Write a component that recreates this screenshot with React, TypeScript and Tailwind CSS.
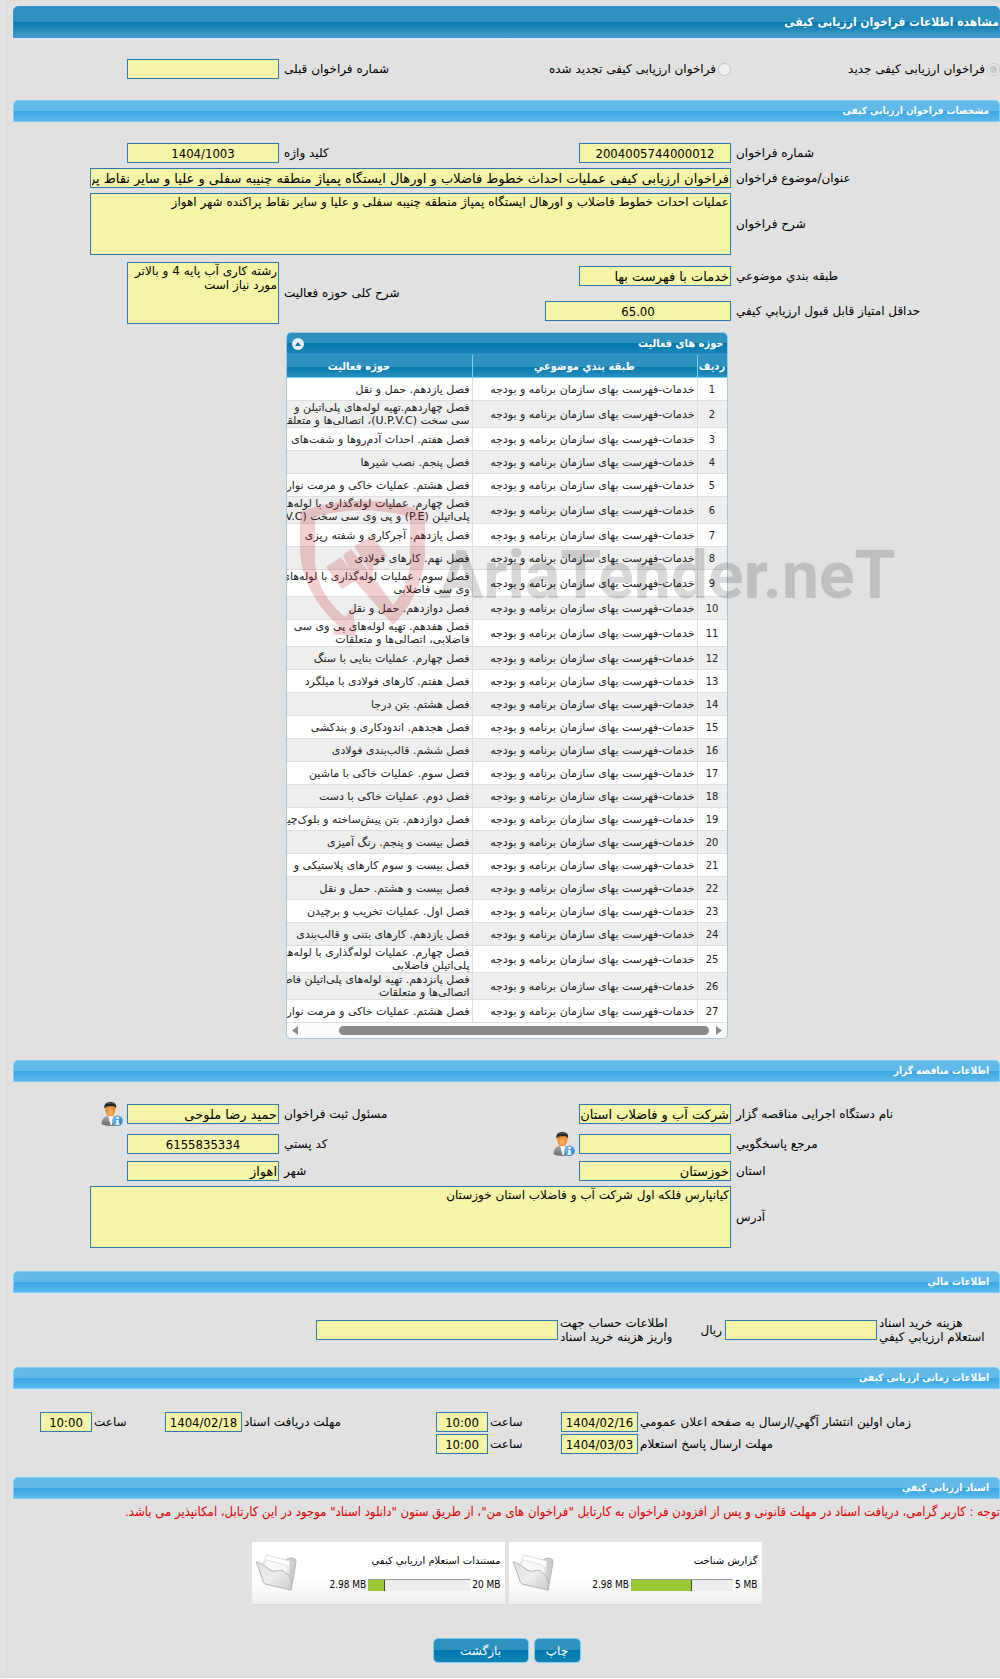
import React from "react";

const TOPIC = "خدمات-فهرست بهای سازمان برنامه و بودجه";

const activities: string[][] = [
  ["فصل یازدهم. حمل و نقل"],
  ["فصل چهاردهم.تهیه لوله‌های پلی‌اتیلن و", "سی سخت (U.P.V.C)، اتصالی‌ها و متعلقات"],
  ["فصل هفتم. احداث آدم‌روها و شفت‌های ف"],
  ["فصل پنجم. نصب شیرها"],
  ["فصل هشتم. عملیات خاکی و مرمت نوار"],
  ["فصل چهارم. عملیات لوله‌گذاری با لوله‌های", "پلی‌اتیلن (P.E) و پی وی سی سخت (U.P.V.C)"],
  ["فصل یازدهم. آجرکاری و شفته ریزی"],
  ["فصل نهم. کارهای فولادی"],
  ["فصل سوم. عملیات لوله‌گذاری با لوله‌های", "وی سی فاضلابی"],
  ["فصل دوازدهم. حمل و نقل"],
  ["فصل هفدهم. تهیه لوله‌های پی وی سی", "فاضلابی، اتصالی‌ها و متعلقات"],
  ["فصل چهارم. عملیات بنایی با سنگ"],
  ["فصل هفتم. کارهای فولادی با میلگرد"],
  ["فصل هشتم. بتن درجا"],
  ["فصل هجدهم. اندودکاری و بندکشی"],
  ["فصل ششم. قالب‌بندی فولادی"],
  ["فصل سوم. عملیات خاکی با ماشین"],
  ["فصل دوم. عملیات خاکی با دست"],
  ["فصل دوازدهم. بتن پیش‌ساخته و بلوک‌چینی"],
  ["فصل بیست و پنجم. رنگ آمیزی"],
  ["فصل بیست و سوم کارهای پلاستیکی و"],
  ["فصل بیست و هشتم. حمل و نقل"],
  ["فصل اول. عملیات تخریب و برچیدن"],
  ["فصل یازدهم. کارهای بتنی و قالب‌بندی"],
  ["فصل چهارم. عملیات لوله‌گذاری با لوله‌های", "پلی‌اتیلن فاضلابی"],
  ["فصل پانزدهم. تهیه لوله‌های پلی‌اتیلن فاضلابی", "اتصالی‌ها و متعلقات"],
  ["فصل هشتم. عملیات خاکی و مرمت نوار"],
];

const documents = [
  { title: "گزارش شناخت", used: "2.98 MB", total: "5 MB", percent: 60 },
  { title: "مستندات استعلام ارزيابي کيفي", used: "2.98 MB", total: "20 MB", percent: 16 },
];

const SectionBar = ({ title }: { title: string }) => (
  <h2
    className="
      h-[22px] pr-[10px] flex items-center rounded-t-[5px]
      border border-[#75d0f5] text-[10px] font-bold text-white
      font-['DejaVu_Sans_Condensed','DejaVu_Sans',sans-serif]
      bg-[linear-gradient(#62baea_50%,#39a6e2_50%,#5ab7eb)]"
  >
    {title}
  </h2>
);

const Label = ({ id, children }: { id: string; children: React.ReactNode }) => (
  <label htmlFor={id} className="pl-[5px] text-left">
    {children}
  </label>
);

type FieldProps = {
  id: string;
  value?: string;
  center?: boolean;
};

const Field = ({ id, value = "", center }: FieldProps) => (
  <input
    id={id}
    type="text"
    readOnly
    defaultValue={value}
    className={`h-5 w-full min-w-0 border border-[#2a7cad] bg-[#f6f4a6] px-px text-[13px] leading-4 ${
      center ? "text-center font-['DejaVu_Sans_Condensed','DejaVu_Sans',sans-serif]" : "text-right"
    }`}
  />
);

const Area = ({ id, value }: FieldProps) => (
  <textarea
    id={id}
    readOnly
    defaultValue={value}
    className="block h-[62px] w-full resize-none overflow-hidden border border-[#2a7cad] bg-[#f6f4a6] px-px py-px text-xs leading-[14px]"
  />
);

const PersonInfo = () => (
  <button type="button" aria-label="اطلاعات" className="mr-1 shrink-0">
    <svg width="22" height="25" viewBox="0 0 22 25" className="block">
      <defs>
        <linearGradient id="suit" x1="0" y1="0" x2="0" y2="1">
          <stop offset="0" stopColor="#a9a9a9" />
          <stop offset="1" stopColor="#6b6b6b" />
        </linearGradient>
        <radialGradient id="face" cx="0.5" cy="0.65" r="0.6">
          <stop offset="0" stopColor="#ffb765" />
          <stop offset="1" stopColor="#e07a22" />
        </radialGradient>
        <linearGradient id="badge" x1="0" y1="0" x2="1" y2="1">
          <stop offset="0" stopColor="#7cc4f5" />
          <stop offset="1" stopColor="#1878cf" />
        </linearGradient>
      </defs>
      <path d="M0.500 22c0-5 2.500-7 6-8.500h6c3.500 1 6 3.500 6.500 8.500-4 2.500-14 2.800-18.500 0z" fill="url(#suit)" />
      <path d="M7 13.500h5.500l-1.500 9.500H9.500z" fill="#f4f6f8" />
      <ellipse cx="9.300" cy="8" rx="5" ry="6.300" fill="url(#face)" />
      <path d="M3.500 6.500C2.500 2 6 0 9.500 0s6.500 2 5.500 6.500c-1-1.500-1.500-2.500-4-2.500-3 .2-5 .3-6 1z" fill="#252525" />
      <path d="M6 1.800c2-1 5-1 7 .1" stroke="#707070" strokeWidth="0.800" fill="none" />
      <circle cx="16.500" cy="18.800" r="5.300" fill="url(#badge)" />
      <rect x="15.400" y="15" width="2.400" height="2" fill="#fff" />
      <path d="M14.800 17.900h3v3.600h.7v1.200h-4v-1.200h.8v-2.400h-.5z" fill="#fff" />
    </svg>
  </button>
);

const Folder = () => (
  <svg width="42" height="38" viewBox="0 0 42 38" className="shrink-0">
    <defs>
      <linearGradient id="folderFront" x1="0" y1="0" x2="1" y2="1">
        <stop offset="0" stopColor="#e2e2e2" />
        <stop offset="0.500" stopColor="#ececec" />
        <stop offset="1" stopColor="#cdcdcd" />
      </linearGradient>
    </defs>
    <path d="M27 8c3-1 5-4 9-4 3 0 5 1 5 4l-2 12-3 16-6-4z" fill="#cfcfcf" stroke="#b8b8b8" />
    <path d="M8 9c2-1 2-5 4-8 8 2 14 4 23 6l-2 20-14-5z" fill="#fff" stroke="#dcdcdc" />
    <path d="M9 11l2-5c9 2 15 3 22 7l-2 15z" fill="#f8f8f8" stroke="#e2e2e2" />
    <path d="M1 8c8 1 11 8 17 9 5 1 8-3 13 2 5 4 6 9 5 17L10 30c-3-2-4-12-9-22z" fill="url(#folderFront)" stroke="#b4b4b4" />
  </svg>
);

const ActivityTable = () => (
  <div className="mx-auto w-[442px] max-w-full overflow-hidden rounded-[5px] border border-[#a3c7e0] bg-[#fcfcfc]">
    <div
      className="
        flex h-[22px] items-center justify-between pl-[5px] pr-[3px]
        border-b border-[#4297d7] text-[11px] font-bold text-white
        font-['DejaVu_Sans_Condensed','DejaVu_Sans',sans-serif]
        bg-[linear-gradient(#2e91bf_50%,#0078ae_50%,#1c87b8)]"
    >
      <span>حوزه های فعالیت</span>
      <button
        type="button"
        aria-label="بستن جدول"
        className="flex size-3 items-center justify-center rounded-full bg-[#e6eefa]"
      >
        <svg width="6" height="4" viewBox="0 0 6 4">
          <path d="M0 4l3-4 3 4z" fill="#1c6f9f" />
        </svg>
      </button>
    </div>

    <div className="overflow-hidden">
      <table className="w-[480px] table-fixed border-separate border-spacing-0 text-[11px] leading-[13px] text-[#222]">
        <thead className="font-['DejaVu_Sans_Condensed','DejaVu_Sans',sans-serif]">
          <tr
            className="
              h-[23px] text-white
              bg-[linear-gradient(#2e91bf_50%,#0078ae_50%,#2f90bf)]"
          >
            <th className="w-[30px] border-b border-l border-[#75d0f5] p-0">ردیف</th>
            <th className="w-[225px] border-b border-l border-[#75d0f5] p-0">طبقه بندي موضوعي</th>
            <th className="w-[225px] border-b border-[#75d0f5] p-0">حوزه فعالیت</th>
          </tr>
        </thead>
        <tbody>
          {activities.map((lines, i) => (
            <tr key={i} className={`${lines.length > 1 ? "h-[27px]" : "h-[23px]"} odd:bg-white even:bg-[#eee]`}>
              <td className="border-b border-l border-[#ddd] p-0 text-center font-['DejaVu_Sans_Condensed','DejaVu_Sans',sans-serif]">
                {i + 1}
              </td>
              <td className="whitespace-nowrap border-b border-l border-[#ddd] py-0 pl-0 pr-[2px]">{TOPIC}</td>
              <td className="whitespace-nowrap border-b border-[#ddd] py-0 pl-0 pr-[2px]">
                {lines.map((line) => (
                  <div key={line}>{line}</div>
                ))}
              </td>
            </tr>
          ))}
        </tbody>
      </table>
    </div>

    {/* horizontal scroller */}
    <div className="flex h-[15px] items-center gap-[7px] px-[5px]">
      <svg width="6" height="9" viewBox="0 0 6 9">
        <path d="M0 0l6 4.500L0 9z" fill="#8b8b8b" />
      </svg>
      <div className="h-[9px] w-[370px] rounded-full bg-[#8b8b8b]" />
      <div className="flex-1" />
      <svg width="6" height="9" viewBox="0 0 6 9">
        <path d="M6 0L0 4.500 6 9z" fill="#8b8b8b" />
      </svg>
    </div>
  </div>
);

const Watermark = () => (
  <div dir="ltr" className="pointer-events-none absolute left-[300px] top-[500px] flex items-start">
    <svg width="125" height="137" viewBox="0 0 125 137" fill="#c0141c" fillOpacity="0.2">
      <path d="M0 12C38-3 87-3 125 12v45c-3 28-15 51-32 68L54 80l18-5 21 30c12-15 17-30 17-45V17C80 8 45 8 15 17v43c1 25 13 42 30 57l8-10 3 30-24-3 8-7C15 105 2 80 0 52z" />
      <path d="M26 67l15-10 16 23-15 9z M43 55l8-6 21 26-18 5z M54 46l18-10 15 20-13 9-2 10z" />
    </svg>
    <span className="ml-[14px] mt-6 whitespace-nowrap font-['Roboto','Liberation_Sans',sans-serif] text-[66px] font-bold leading-[104px] text-black/15">
      AriaTender.neT
    </span>
  </div>
);

const formGrid = "grid grid-cols-[269fr_152px_300fr_152px_37px_77fr] items-center gap-y-[5px]";

const timeGrid =
  "grid grid-cols-[362fr_77px_73fr_52px_194fr_77px_73fr_52px_27fr] items-center gap-y-[2px]";

const buttonClass =
  "h-[25px] rounded-[5px] border border-[#75d0f5] text-xs text-white bg-[linear-gradient(#2e91bf_50%,#0078ae_50%,#1383b5)]";

const App = () => {
  return (
    <div
      dir="rtl"
      className="
        relative w-full overflow-hidden bg-[#e1e1e1] pl-[7px]
        font-['DejaVu_Sans',sans-serif] text-xs leading-[14px] text-black"
    >
      <main className="border-y border-l border-[#dcdcdc] pl-[5px] pt-[5px] pb-[14px]">
        <h1
          className="
            flex h-8 items-center rounded-t-[5px] border border-[#3591dc] text-xs font-bold text-white
            font-['DejaVu_Sans_Condensed','DejaVu_Sans',sans-serif]
            bg-[linear-gradient(#2e91bf_50%,#0078ae_50%,#479cc6)]"
        >
          مشاهده اطلاعات فراخوان ارزیابی کیفی
        </h1>

        <div className="grid h-[62px] grid-cols-[269fr_452fr_152px_114fr] items-center">
          <label className="flex items-center gap-[2px]">
            <input type="radio" name="kind" disabled defaultChecked className="size-[13px]" />
            فراخوان ارزیابی کیفی جدید
          </label>
          <div className="flex items-center justify-between">
            <label className="flex items-center gap-[2px]">
              <input type="radio" name="kind" disabled className="size-[13px]" />
              فراخوان ارزیابی کیفی تجدید شده
            </label>
            <Label id="previous">شماره فراخوان قبلی</Label>
          </div>
          <Field id="previous" />
        </div>

        <SectionBar title="مشخصات فراخوان ارزیابی کیفی" />

        <div className={`${formGrid} pt-[21px] pb-[7px]`}>
          <Label id="number">شماره فراخوان</Label>
          <Field id="number" value="2004005744000012" center />
          <Label id="keyword">کلید واژه</Label>
          <Field id="keyword" value="1404/1003" center />

          <div className="col-start-1 text-left">
            <Label id="subject">عنوان/موضوع فراخوان</Label>
          </div>
          <div className="col-span-4">
            <Field
              id="subject"
              value="فراخوان ارزیابی کیفی عملیات احداث خطوط فاضلاب و اورهال ایستگاه پمپاژ منطقه چنیبه سفلی و علیا و سایر نقاط پراکنده شهر اهواز"
            />
          </div>

          <div className="col-start-1 text-left">
            <Label id="description">شرح فراخوان</Label>
          </div>
          <div className="col-span-4">
            <Area
              id="description"
              value="عملیات احداث خطوط فاضلاب و اورهال ایستگاه پمپاژ منطقه چنیبه سفلی و علیا و سایر نقاط پراکنده شهر اهواز"
            />
          </div>

          <div className="col-start-1 flex h-8 items-center justify-end">
            <Label id="category">طبقه بندي موضوعي</Label>
          </div>
          <Field id="category" value="خدمات با فهرست بها" />
          <div className="row-span-2 text-left">
            <Label id="scope">شرح کلی حوزه فعالیت</Label>
          </div>
          <div className="row-span-2">
            <Area id="scope" value="رشته کاری آب پایه 4 و بالاتر مورد نیاز است" />
          </div>

          <div className="col-start-1 flex h-7 items-center justify-end">
            <Label id="score">حداقل امتياز قابل قبول ارزيابي کيفي</Label>
          </div>
          <div className="w-[186px]">
            <Field id="score" value="65.00" center />
          </div>
        </div>

        <ActivityTable />

        <div className="pt-[21px]">
          <SectionBar title="اطلاعات مناقصه گزار" />
        </div>

        <div className={`${formGrid} pt-[19px] pb-[23px]`}>
          <div className="flex h-[26px] items-center justify-end">
            <Label id="organization">نام دستگاه اجرایی مناقصه گزار</Label>
          </div>
          <Field id="organization" value="شرکت آب و فاضلاب استان" />
          <Label id="registrar">مسئول ثبت فراخوان</Label>
          <Field id="registrar" value="حمید رضا ملوحی" />
          <PersonInfo />

          <div className="col-start-1 flex h-6 items-center justify-end">
            <Label id="contact">مرجع پاسخگويي</Label>
          </div>
          <Field id="contact" />
          <div className="flex h-6 items-center justify-between">
            <PersonInfo />
            <Label id="postcode">کد پستي</Label>
          </div>
          <Field id="postcode" value="6155835334" center />

          <div className="col-start-1 text-left">
            <Label id="province">استان</Label>
          </div>
          <Field id="province" value="خوزستان" />
          <Label id="city">شهر</Label>
          <Field id="city" value="اهواز" />

          <div className="col-start-1 text-left">
            <Label id="address">آدرس</Label>
          </div>
          <div className="col-span-4">
            <Area id="address" value="کیانپارس فلکه اول شرکت آب و فاضلاب استان خوزستان" />
          </div>
        </div>

        <SectionBar title="اطلاعات مالي" />

        <div className="grid h-[74px] grid-cols-[123fr_152px_167fr_242px_303fr] items-center">
          <label htmlFor="fee" className="pl-[2px] text-left">
            هزينه خريد اسناد
            <br />
            استعلام ارزيابي کيفي
          </label>
          <Field id="fee" />
          <div className="flex items-center justify-between pl-[2px] pr-[3px]">
            <span>ریال</span>
            <label htmlFor="account" className="text-left">
              اطلاعات حساب جهت
              <br />
              واریز هزینه خرید اسناد
            </label>
          </div>
          <Field id="account" />
        </div>

        <SectionBar title="اطلاعات زمانی ارزیابی کیفی" />

        <div className={`${timeGrid} pt-[23px] pb-[23px]`}>
          <label htmlFor="publishDate" className="pl-[2px] text-left">
            زمان اولین انتشار آگهي/ارسال به صفحه اعلان عمومي
          </label>
          <Field id="publishDate" value="1404/02/16" center />
          <label htmlFor="publishTime" className="pl-[2px] text-left">ساعت</label>
          <Field id="publishTime" value="10:00" center />
          <label htmlFor="receiveDate" className="pl-[2px] text-left">مهلت دریافت اسناد</label>
          <Field id="receiveDate" value="1404/02/18" center />
          <label htmlFor="receiveTime" className="pl-[2px] text-left">ساعت</label>
          <Field id="receiveTime" value="10:00" center />

          <label htmlFor="replyDate" className="col-start-1 pl-[2px] text-left">
            مهلت ارسال پاسخ استعلام
          </label>
          <Field id="replyDate" value="1404/03/03" center />
          <label htmlFor="replyTime" className="pl-[2px] text-left">ساعت</label>
          <Field id="replyTime" value="10:00" center />
        </div>

        <SectionBar title="اسناد ارزيابي کيفي" />

        <p className="pt-[6px] font-['DejaVu_Sans_Condensed','DejaVu_Sans',sans-serif] text-[13px] leading-[14px] text-[#e00000]">
          توجه : کاربر گرامی، دریافت اسناد در مهلت قانونی و پس از افزودن فراخوان به کارتابل "فراخوان های من"، از طریق ستون
          "دانلود اسناد" موجود در این کارتابل، امکانپذیر می باشد.
        </p>

        <div className="flex justify-center gap-1 pt-[23px]">
          {documents.map((doc) => (
            <article
              key={doc.title}
              className="flex h-[63px] w-[253px] items-center justify-between border-b border-[#d8d8d8] bg-linear-to-b from-white from-60% to-[#efefef] pl-[3px] pr-[4px] text-[10px]"
            >
              <div className="flex flex-col gap-[10px]">
                <h3>{doc.title}</h3>
                <div className="flex items-center gap-[2px] font-['DejaVu_Sans_Condensed','DejaVu_Sans',sans-serif]">
                  <span dir="ltr">{doc.total}</span>
                  <div dir="ltr" className="h-3 w-[102px] border-t border-[#999] bg-[#eee]">
                    <div
                      className="h-full border-r border-[#444] bg-[#9acb34]"
                      style={{ width: `${doc.percent}%` }}
                    />
                  </div>
                  <span dir="ltr">{doc.used}</span>
                </div>
              </div>
              <Folder />
            </article>
          ))}
        </div>

        <div className="flex justify-center gap-[5px] pt-[33px]">
          <button type="button" className={`${buttonClass} w-[47px]`}>چاپ</button>
          <button type="button" className={`${buttonClass} w-24`}>بازگشت</button>
        </div>
      </main>

      <Watermark />
    </div>
  );
};

export default App;
